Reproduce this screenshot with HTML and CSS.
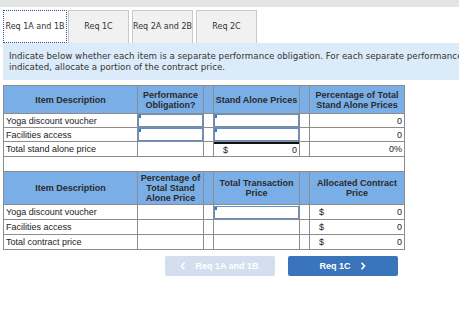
FILE: index.html
```html
<!DOCTYPE html>
<html>
	<head>
		<meta charset="utf-8">
		<title>Req 1A and 1B</title>
		<link rel="stylesheet" href="styles.css">
	</head>
	<body>
		<div class="topbar"></div>
		<div class="page">
			<div class="tabs">
				<div class="tab active">Req 1A and 1B</div>
				<div class="tab">Req 1C</div>
				<div class="tab">Req 2A and 2B</div>
				<div class="tab">Req 2C</div>
			</div>
			<div class="note">Indicate below whether each item is a separate performance obligation. For each separate performance obligation indicated, allocate a portion of the contract price.</div>
			<table class="grid">
				<colgroup>
					<col class="c-item">
					<col class="c-a">
					<col class="c-gap">
					<col class="c-b">
					<col class="c-gap">
					<col class="c-c">
				</colgroup>
				<tr class="head">
					<th>Item Description</th>
					<th>Performance<br>Obligation?</th>
					<th></th>
					<th>Stand Alone Prices</th>
					<th></th>
					<th>Percentage of Total<br>Stand Alone Prices</th>
				</tr>
				<tr class="row">
					<td class="label">Yoga discount voucher</td>
					<td><div class="field"><input type="text"></div></td>
					<td></td>
					<td><div class="field"><input type="text"></div></td>
					<td></td>
					<td class="num">0</td>
				</tr>
				<tr class="row">
					<td class="label">Facilities access</td>
					<td><div class="field"><input type="text"></div></td>
					<td></td>
					<td><div class="field"><input type="text"></div></td>
					<td></td>
					<td class="num">0</td>
				</tr>
				<tr class="row">
					<td class="label">Total stand alone price</td>
					<td></td>
					<td></td>
					<td><div class="money total"><span>$</span><span>0</span></div></td>
					<td></td>
					<td class="num">0%</td>
				</tr>
				<tr class="spacer"><td colspan="6"></td></tr>
				<tr class="head tall">
					<th>Item Description</th>
					<th>Percentage of<br>Total Stand<br>Alone Price</th>
					<th></th>
					<th>Total Transaction<br>Price</th>
					<th></th>
					<th>Allocated Contract<br>Price</th>
				</tr>
				<tr class="row wide">
					<td class="label">Yoga discount voucher</td>
					<td></td>
					<td></td>
					<td><div class="field"><input type="text"></div></td>
					<td></td>
					<td><div class="money"><span>$</span><span>0</span></div></td>
				</tr>
				<tr class="row wide">
					<td class="label">Facilities access</td>
					<td></td>
					<td></td>
					<td></td>
					<td></td>
					<td><div class="money"><span>$</span><span>0</span></div></td>
				</tr>
				<tr class="row wide">
					<td class="label">Total contract price</td>
					<td></td>
					<td></td>
					<td></td>
					<td></td>
					<td><div class="money"><span>$</span><span>0</span></div></td>
				</tr>
			</table>
			<div class="nav">
				<button class="btn prev" disabled>
					<svg width="6" height="8" viewBox="0 0 6 8"><path d="M4.5 0.8 L1.5 4 L4.5 7.2" fill="none" stroke="#fff" stroke-width="1.6"/></svg>
					Req 1A and 1B
				</button>
				<button class="btn next">
					Req 1C
					<svg width="6" height="8" viewBox="0 0 6 8"><path d="M1.5 0.8 L4.5 4 L1.5 7.2" fill="none" stroke="#fff" stroke-width="1.6"/></svg>
				</button>
			</div>
		</div>
	</body>
</html>
```

FILE: styles.css
```css
*{
	margin: 0;
	padding: 0;
	box-sizing: border-box;
}
body{
	background: #fff;
	overflow: hidden;
	font-family: "DejaVu Sans", Verdana, sans-serif;
	color: #333;
}
.topbar{
	height: 7px;
	background: #e4e4e4;
}
.page{
	width: 556px;
	margin: 3px 0 0 3px;
}
.tabs{
	display: flex;
	height: 33px;
}
.tab{
	width: 61px;
	height: 33px;
	margin-right: 3px;
	background: #f1f1f1;
	border: 1px solid #c9c9c9;
	border-bottom: 0;
	font-size: 8px;
	line-height: 31px;
	text-align: center;
	white-space: nowrap;
	color: #333;
}
.tab.active{
	width: 64px;
	margin-right: 1px;
	background: #fff;
	border: 1px dotted #2d4f9e;
}
.note{
	background: #dcebf9;
	padding: 8px 5px 7px 6px;
	font-size: 8.7px;
	line-height: 11px;
	color: #333;
}
.grid{
	margin-top: 5px;
	width: 401px;
	table-layout: fixed;
	border-collapse: collapse;
	font-family: "Liberation Sans", Arial, sans-serif;
	font-size: 9px;
	color: #222;
}
.c-item{ width: 134px; }
.c-a{ width: 66px; }
.c-gap{ width: 10px; }
.c-b{ width: 86px; }
.c-c{ width: 95px; }
.grid th,
.grid td{
	border: 1px solid #8c8c8c;
	padding: 0;
}
.grid th{
	background: #7aaee6;
	font-weight: bold;
	color: #2a2a2a;
	line-height: 10px;
	text-align: center;
	vertical-align: middle;
}
.head{
	height: 28px;
}
.head.tall{
	height: 33px;
}
.row{
	height: 14px;
}
.row.wide{
	height: 15px;
}
.label{
	padding-left: 2px !important;
	white-space: nowrap;
}
.num{
	text-align: right;
	padding-right: 2px !important;
}
.spacer{
	height: 15px;
}
.spacer td{
	border-top: 0 !important;
	border-bottom: 0 !important;
}
.field{
	position: relative;
	height: 13px;
}
.field input{
	display: block;
	width: 100%;
	height: 100%;
	border: 1px solid #5f8fcb;
	background: #fff;
	outline: none;
}
.field::before{
	content: "";
	position: absolute;
	left: 1px;
	top: 1px;
	width: 2px;
	height: 3px;
	background: #3f73c0;
}
.money{
	display: flex;
	justify-content: space-between;
	padding: 0 2px 0 9px;
	line-height: 12px;
}
.money.total{
	border-top: 2px solid #111;
}
.nav{
	display: flex;
	justify-content: center;
	gap: 13px;
	margin-top: 6px;
}
.btn{
	display: flex;
	align-items: center;
	justify-content: center;
	gap: 9px;
	width: 110px;
	height: 20px;
	border: 0;
	border-radius: 2px;
	font-family: "Liberation Sans", Arial, sans-serif;
	font-size: 9px;
	font-weight: bold;
	color: #fff;
	cursor: pointer;
}
.btn.prev{
	background: #d3dfee;
	cursor: default;
}
.btn.next{
	background: #3a74ba;
}
```
